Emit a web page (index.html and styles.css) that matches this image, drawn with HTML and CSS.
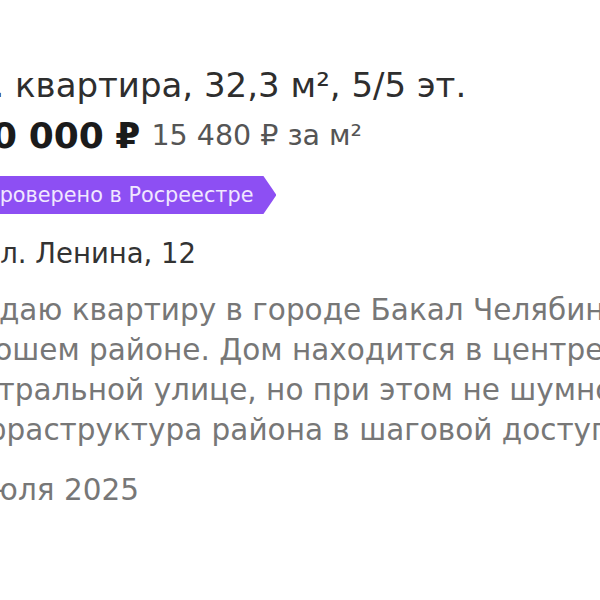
FILE: index.html
```html
<!DOCTYPE html>
<html lang="ru">
<head>
<meta charset="utf-8">
<link rel="stylesheet" href="styles.css">
</head>
<body>
<div class="card">
  <div class="title">1-к. квартира, 32,3 м², 5/5 эт.</div>
  <div class="price"><span class="amount">500 000 ₽</span><span class="per">15 480 ₽ за м²</span></div>
  <div class="badge-row"><span class="badge">Проверено в Росреестре</span></div>
  <div class="address">ул. Ленина, 12</div>
  <div class="desc">
    <div class="line">Продаю квартиру в городе Бакал Челябинской области в</div>
    <div class="line">хорошем районе. Дом находится в центре на</div>
    <div class="line">центральной улице, но при этом не шумно.</div>
    <div class="line">Инфраструктура района в шаговой доступности.</div>
  </div>
  <div class="date">12 июля 2025</div>
</div>
</body>
</html>
```

FILE: styles.css
```css
html, body {
  margin: 0;
  padding: 0;
  background: #ffffff;
  overflow: hidden;
  width: 600px;
  height: 600px;
}
.card {
  padding-top: 65px;
  font-family: "DejaVu Sans", "Noto Sans", sans-serif;
  white-space: nowrap;
}
.title {
  font-size: 34px;
  line-height: 40px;
  color: #2e2e2e;
  margin-left: -61px;
}
.price {
  margin-top: 3px;
  height: 54px;
  margin-left: -58px;
  display: flex;
  align-items: center;
  gap: 11px;
}
.amount {
  font-size: 36px;
  font-weight: 700;
  color: #1b1b1b;
  word-spacing: -1px;
}
.per {
  font-size: 28.5px;
  color: #555555;
}
.badge-row {
  margin-top: 14px;
  margin-left: -28px;
  display: flex;
}
.badge {
  display: inline-block;
  height: 38px;
  line-height: 38px;
  padding: 0 23px 0 12px;
  font-size: 20.8px;
  color: #f1e8ff;
  background: #8d4ff3;
  clip-path: polygon(0 0, calc(100% - 13px) 0, 100% 50%, calc(100% - 13px) 100%, 0 100%);
}
.address {
  margin-top: 20px;
  font-size: 27.5px;
  line-height: 38px;
  color: #333333;
  margin-left: -16px;
}
.desc {
  margin-top: 18px;
  font-size: 29.5px;
  line-height: 40px;
  color: #777777;
  margin-left: -60px;
}
.date {
  margin-top: 20px;
  font-size: 29.5px;
  line-height: 40px;
  color: #777777;
  margin-left: -73px;
}
```
